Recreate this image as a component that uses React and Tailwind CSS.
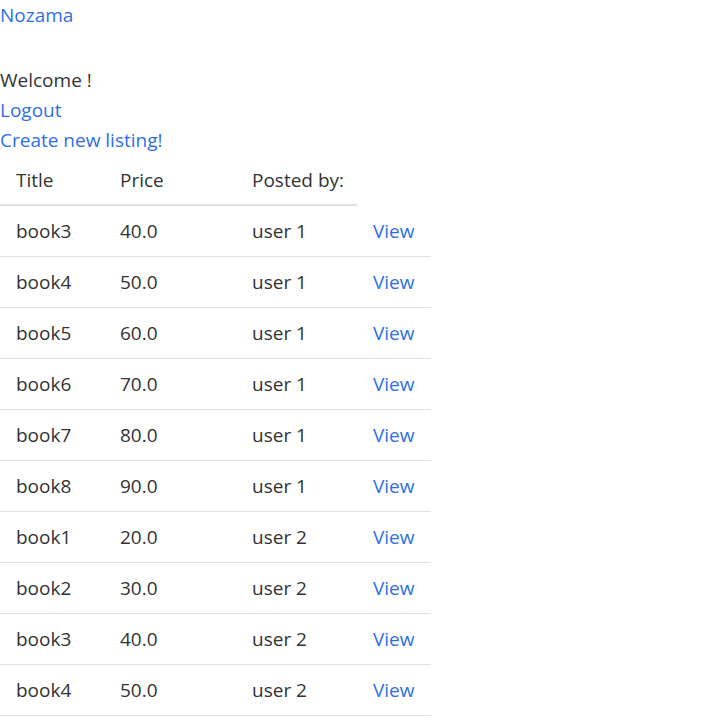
import React from "react";

const listings = [
  { title: "book3", price: "40.0", user: "user 1" },
  { title: "book4", price: "50.0", user: "user 1" },
  { title: "book5", price: "60.0", user: "user 1" },
  { title: "book6", price: "70.0", user: "user 1" },
  { title: "book7", price: "80.0", user: "user 1" },
  { title: "book8", price: "90.0", user: "user 1" },
  { title: "book1", price: "20.0", user: "user 2" },
  { title: "book2", price: "30.0", user: "user 2" },
  { title: "book3", price: "40.0", user: "user 2" },
  { title: "book4", price: "50.0", user: "user 2" },
];

const App = () => {
  return (
    <div className="min-h-screen bg-white text-[#333] text-[19px] leading-[30px] font-['Open_Sans',sans-serif]">
      <a href="#" className="text-[#2f6fe4] block w-fit">
        Nozama
      </a>

      <div className="mt-[35px]">
        <p>Welcome !</p>
        <a href="#" className="text-[#2f6fe4] block w-fit">
          Logout
        </a>
        <a href="#" className="text-[#2f6fe4] block w-fit">
          Create new listing!
        </a>
      </div>

      <table className="border-collapse text-left table-fixed w-[431px] whitespace-nowrap">
        <colgroup>
          <col className="w-[104px]" />
          <col className="w-[132px]" />
          <col className="w-[121px]" />
          <col className="w-[74px]" />
        </colgroup>
        <thead>
          <tr>
            <th className="font-normal px-4 pt-[10px] pb-[9px] border-b-2 border-[#dee2e6]">Title</th>
            <th className="font-normal px-4 pt-[10px] pb-[9px] border-b-2 border-[#dee2e6]">Price</th>
            <th className="font-normal px-4 pt-[10px] pb-[9px] border-b-2 border-[#dee2e6]">Posted by:</th>
          </tr>
        </thead>
        <tbody>
          {listings.map((item, index) => (
            <tr key={index}>
              <td className="px-4 py-[10px] border-b border-[#dee2e6]">{item.title}</td>
              <td className="px-4 py-[10px] border-b border-[#dee2e6]">{item.price}</td>
              <td className="px-4 py-[10px] border-b border-[#dee2e6]">{item.user}</td>
              <td className="px-4 py-[10px] border-b border-[#dee2e6]">
                <a href="#" className="text-[#2f6fe4]">View</a>
              </td>
            </tr>
          ))}
        </tbody>
      </table>
    </div>
  );
};

export default App;
